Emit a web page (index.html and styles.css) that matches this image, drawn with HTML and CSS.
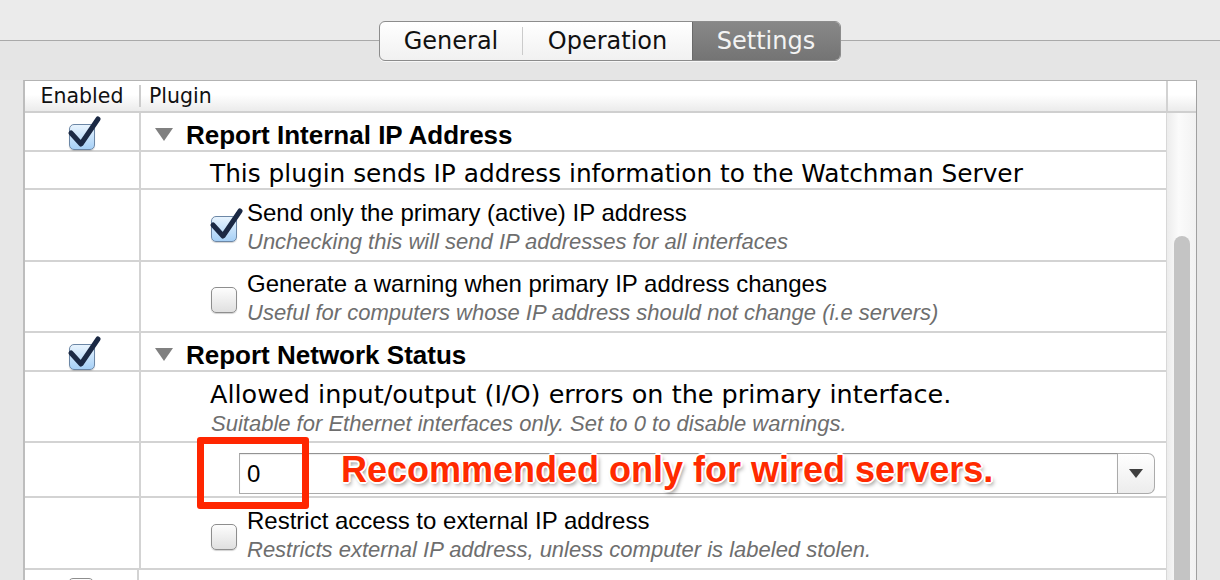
FILE: index.html
```html
<!DOCTYPE html>
<html lang="en">
<head>
    <meta charset="UTF-8">
    <title>Watchman Settings</title>
    <link rel="stylesheet" href="styles.css">
</head>
<body>

    <!-- Tab bar -->
    <div class="toolbar">
        <div class="segmented">
            <span class="seg seg-general">General</span>
            <span class="seg-divider"></span>
            <span class="seg seg-operation">Operation</span>
            <span class="seg seg-settings active">Settings</span>
        </div>
    </div>

    <!-- Plugin table -->
    <div class="panel">
        <div class="head">
            <div class="head-enabled">Enabled</div>
            <span class="head-divider"></span>
            <div class="head-plugin">Plugin</div>
            <div class="head-corner"></div>
        </div>

        <div class="body">
            <div class="rows">
                <div class="row r39">
                    <div class="cell-en low"><span class="cb checked"><svg viewBox="0 0 34 36"><polyline points="4,17 14,28 31,3"/></svg></span></div>
                    <div class="cell-pl title-cell"><span class="disclosure"></span><span class="title">Report Internal IP Address</span></div>
                </div>
                <div class="row r38">
                    <div class="cell-en"></div>
                    <div class="cell-pl desc-cell"><span class="desc">This plugin sends IP address information to the Watchman Server</span></div>
                </div>
                <div class="row r72">
                    <div class="cell-en"></div>
                    <div class="cell-pl option-cell">
                        <span class="cb checked"><svg viewBox="0 0 34 36"><polyline points="4,17 14,28 31,3"/></svg></span>
                        <div class="option-text">
                            <div class="label">Send only the primary (active) IP address</div>
                            <div class="hint">Unchecking this will send IP addresses for all interfaces</div>
                        </div>
                    </div>
                </div>
                <div class="row r71">
                    <div class="cell-en"></div>
                    <div class="cell-pl option-cell">
                        <span class="cb"></span>
                        <div class="option-text">
                            <div class="label">Generate a warning when primary IP address changes</div>
                            <div class="hint">Useful for computers whose IP address should not change (i.e servers)</div>
                        </div>
                    </div>
                </div>
                <div class="row r39">
                    <div class="cell-en low"><span class="cb checked"><svg viewBox="0 0 34 36"><polyline points="4,17 14,28 31,3"/></svg></span></div>
                    <div class="cell-pl title-cell"><span class="disclosure"></span><span class="title">Report Network Status</span></div>
                </div>
                <div class="row r71">
                    <div class="cell-en"></div>
                    <div class="cell-pl desc-cell stacked">
                        <div class="desc wide">Allowed input/output (I/O) errors on the primary interface.</div>
                        <div class="hint small">Suitable for Ethernet interfaces only. Set to 0 to disable warnings.</div>
                    </div>
                </div>
                <div class="row r55">
                    <div class="cell-en"></div>
                    <div class="cell-pl combo-cell">
                        <div class="combo">
                            <div class="combo-field">0</div>
                            <div class="combo-btn"><span class="combo-arrow"></span></div>
                        </div>
                    </div>
                </div>
                <div class="row r72">
                    <div class="cell-en"></div>
                    <div class="cell-pl option-cell">
                        <span class="cb"></span>
                        <div class="option-text">
                            <div class="label">Restrict access to external IP address</div>
                            <div class="hint">Restricts external IP address, unless computer is labeled stolen.</div>
                        </div>
                    </div>
                </div>
                <div class="row last">
                    <div class="cell-en top"><span class="cb"></span></div>
                    <div class="cell-pl"></div>
                </div>
            </div>
            <div class="scrollbar"><div class="thumb"></div></div>
        </div>
    </div>

    <!-- Red annotation on top of the screenshot -->
    <div class="annot-box"></div>
    <div class="annot-text">Recommended only for wired servers.</div>

</body>
</html>
```

FILE: styles.css
```css
body {
    margin: 0;
    padding: 0;
    height: 580px;
    overflow: hidden;
    background-color: #e7e7e7;
    font-family: "DejaVu Sans", sans-serif;
    color: #000;
}

/* Tab bar */
.toolbar {
    height: 80px;
    box-sizing: border-box;
    padding-top: 21px;
    display: flex;
    justify-content: center;
    align-items: flex-start;
    background: linear-gradient(to bottom, #ebebeb 0, #ebebeb 40px, #a9a9a9 40px, #a9a9a9 41px, #e5e5e5 41px);
}

.segmented {
    display: flex;
    align-items: stretch;
    height: 40px;
    box-sizing: border-box;
    border: 1px solid #8c8c8c;
    border-radius: 6px;
    overflow: hidden;
    background: linear-gradient(#ffffff, #f1f1f1);
    box-shadow: 0 1px 0 rgba(255, 255, 255, 0.7);
}

.seg {
    display: flex;
    align-items: center;
    justify-content: center;
    font-size: 24px;
    color: #111;
}

.seg-general {
    width: 142px;
}

.seg-divider {
    width: 1px;
    align-self: center;
    height: 28px;
    background-color: #cbcbcb;
}

.seg-operation {
    width: 169px;
}

.seg-settings {
    width: 148px;
}

.seg.active {
    background: linear-gradient(#888888, #747474);
    color: #f3f3f3;
    box-shadow: inset 1px 0 0 #6a6a6a;
}

/* Table panel */
.panel {
    margin-left: 23px;
    width: 1174px;
    height: 500px;
    box-sizing: border-box;
    border-top: 1px solid #b3b3b3;
    border-left: 2px solid #bdbdbd;
    border-right: 1px solid #a0a0a0;
    background-color: #fff;
}

.head {
    display: flex;
    height: 32px;
    box-sizing: border-box;
    border-bottom: 2px solid #cfcfcf;
    background: linear-gradient(#ffffff 0, #ffffff 45%, #ebebeb 100%);
    font-size: 20.5px;
    color: #111;
}

.head-enabled {
    width: 114px;
    text-align: center;
    line-height: 31px;
}

.head-divider {
    width: 2px;
    height: 22px;
    align-self: center;
    background-color: #cccccc;
}

.head-plugin {
    flex: 1;
    padding-left: 8px;
    line-height: 31px;
}

.head-corner {
    width: 30px;
    border-left: 2px solid #d2d2d2;
    box-sizing: border-box;
}

.body {
    display: flex;
    height: 467px;
    overflow: hidden;
}

.rows {
    flex: 1;
}

.row {
    display: flex;
    box-sizing: border-box;
    border-bottom: 2px solid #d3d3d3;
}

.r38 { height: 38px; }
.r39 { height: 39px; }
.r55 { height: 55px; }
.r71 { height: 71px; }
.r72 { height: 72px; }
.row.last { height: 60px; border-bottom: none; }

.cell-en {
    width: 114px;
    flex-shrink: 0;
    border-right: 2px solid #d3d3d3;
    display: flex;
    align-items: center;
    justify-content: center;
}

.cell-en.low .cb {
    margin-top: 10px;
}

.cell-en.top {
    align-items: flex-start;
    padding-top: 8px;
    box-sizing: border-box;
}

.cell-pl {
    flex: 1;
    display: flex;
    align-items: center;
    box-sizing: border-box;
}

/* Checkboxes */
.cb {
    position: relative;
    flex-shrink: 0;
    width: 26px;
    height: 26px;
    box-sizing: border-box;
    border: 1px solid #8e8e8e;
    border-radius: 5px;
    background: linear-gradient(#fdfdfd, #e0e0e0);
    box-shadow: 0 1px 1px rgba(0, 0, 0, 0.18);
}

.cb.checked {
    border-color: #6c87a6;
    background: linear-gradient(#e8f4fe, #a6d0f6);
}

.cb svg {
    position: absolute;
    left: -3px;
    top: -9px;
    width: 34px;
    height: 36px;
    overflow: visible;
}

.cb polyline {
    fill: none;
    stroke: #1b2944;
    stroke-width: 5;
    stroke-linecap: round;
    stroke-linejoin: round;
}

/* Plugin titles */
.title-cell {
    padding-left: 14px;
    padding-top: 8px;
}

.disclosure {
    width: 0;
    height: 0;
    border-left: 9px solid transparent;
    border-right: 9px solid transparent;
    border-top: 13px solid #808080;
    margin-top: -2px;
}

.title {
    margin-left: 13px;
    font-family: "Liberation Sans", Arial, sans-serif;
    font-weight: bold;
    font-size: 26px;
}

.desc-cell {
    padding-left: 69px;
    padding-top: 8px;
}

.desc-cell.stacked {
    flex-direction: column;
    align-items: flex-start;
    justify-content: center;
    padding-top: 4px;
}

.desc {
    font-size: 24.8px;
    line-height: 30px;
}

.desc.wide {
    font-size: 25.5px;
}

/* Options */
.option-cell {
    padding-left: 70px;
    padding-top: 5px;
}

.option-cell .cb {
    margin-top: 2px;
}

.option-text {
    margin-left: 10px;
    font-family: "Liberation Sans", Arial, sans-serif;
}

.label {
    font-size: 24px;
    line-height: 27px;
}

.hint {
    font-family: "Liberation Sans", Arial, sans-serif;
    font-style: italic;
    font-size: 22px;
    line-height: 31px;
    color: #6e6e6e;
}

.hint.small {
    font-size: 22px;
    line-height: 29px;
    margin-left: 1px;
}

/* Combo box */
.combo-cell {
    padding-left: 98px;
    align-items: flex-start;
    padding-top: 10px;
}

.combo {
    display: flex;
    width: 916px;
    height: 41px;
}

.combo-field {
    flex: 1;
    display: flex;
    align-items: center;
    padding-left: 7px;
    border: 1px solid #ababab;
    border-top-color: #939393;
    background-color: #fff;
    box-shadow: inset 0 1px 1px rgba(0, 0, 0, 0.08);
    font-family: "Liberation Sans", Arial, sans-serif;
    font-size: 24px;
}

.combo-btn {
    width: 36px;
    display: flex;
    align-items: center;
    justify-content: center;
    border: 1px solid #ababab;
    border-left: none;
    border-radius: 0 7px 7px 0;
    background: linear-gradient(#ffffff, #ececec);
}

.combo-arrow {
    width: 0;
    height: 0;
    border-left: 7px solid transparent;
    border-right: 7px solid transparent;
    border-top: 9px solid #3f3f3f;
}

/* Scrollbar */
.scrollbar {
    width: 30px;
    box-sizing: border-box;
    padding: 123px 6px 0 7px;
    border-left: 1px solid #d8d8d8;
    background: linear-gradient(to right, #ececec, #fbfbfb 40%, #f2f2f2);
}

.thumb {
    height: 100%;
    border-radius: 8px 8px 0 0;
    background-color: #c4c4c4;
}

/* Annotation */
.annot-box {
    position: absolute;
    left: 197px;
    top: 437px;
    width: 112px;
    height: 72px;
    box-sizing: border-box;
    border: 7px solid #ff2600;
    border-radius: 3px;
}

.annot-text {
    position: absolute;
    left: 341px;
    top: 452px;
    font-family: "Liberation Sans", Arial, sans-serif;
    font-weight: bold;
    font-size: 36px;
    line-height: 36px;
    color: #ff2a00;
    text-shadow: -1px -1px 0 #fff, 1px -1px 0 #fff, -1px 1px 0 #fff, 1px 1px 0 #fff,
                 0 -2px 0 #fff, 0 2px 0 #fff, -2px 0 0 #fff, 2px 0 0 #fff,
                 2px 3px 4px rgba(0, 0, 0, 0.45);
}
```
